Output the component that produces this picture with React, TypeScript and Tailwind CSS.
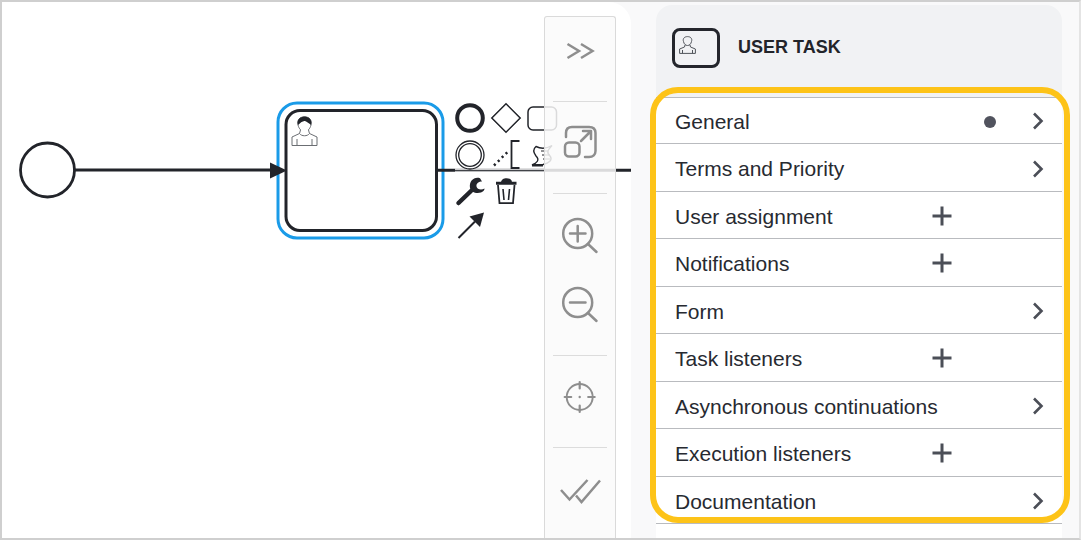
import React from "react";

const ink = "#22242a";
const tool = "#8e8e8e";

function Diagram() {
  return (
    <svg className="block w-[631px] h-[538px]" viewBox="0 0 631 538" fill="none">
      <g transform="translate(0,-2)">
        <circle cx="47.500" cy="170" r="27" stroke={ink} strokeWidth="2.800" fill="#fff" />
        <path d="M75 170H272" stroke={ink} strokeWidth="3" />
        <rect x="278" y="103" width="165" height="135" rx="19" stroke="#1a9be8" strokeWidth="3" />
        <rect x="286" y="110.500" width="150.500" height="120" rx="14" stroke={ink} strokeWidth="3" fill="#fff" />
        <path d="M270 162.500L287 170.500L270 178.500Z" fill={ink} />
        <path d="M437 170.200H631" stroke={ink} strokeWidth="3" />
        <rect x="455" y="168.500" width="90" height="1.400" fill="#fff" opacity="0.85" />
        <rect x="455" y="170.800" width="90" height="1" fill="#fff" opacity="0.75" />
        <svg x="291" y="116" width="27" height="30" viewBox="0 0 27 30" stroke="#6b6e73" strokeWidth="1" fill="none">
          <path d="M7 9C5.500 4 9 .8 13.500 .8C18 .8 21.500 4 20 9C19 13 16.500 15.500 13.500 15.500C10.500 15.500 8 13 7 9Z" fill="#fff" />
          <path d="M7 9C9 7 12 4.500 14 5C16 6 18 7 20 9C21.500 4 18 .5 13.500 .5C9 .5 5.500 4 7 9Z" fill={ink} stroke="none" />
          <path d="M9.500 14L8.500 17.500L1 21V29.500H26V21L18.500 17.500L17.500 14" fill="#fff" />
          <path d="M8.500 17.500C10.500 20.500 16.500 20.500 18.500 17.500M6 29.500V23M21 29.500V23" />
        </svg>
        {/* context pad */}
        <circle cx="470" cy="118" r="12.800" stroke={ink} strokeWidth="4" fill="#fff" />
        <path d="M506 103.800L520.200 118L506 132.200L491.800 118Z" stroke={ink} strokeWidth="1.500" fill="#fff" />
        <rect x="528" y="107" width="28.500" height="23" rx="5" stroke={ink} strokeWidth="1.500" fill="#fff" />
        <circle cx="470" cy="155" r="14" stroke={ink} strokeWidth="1.300" fill="#fff" />
        <circle cx="470" cy="155" r="11.300" stroke={ink} strokeWidth="1.300" />
        <path d="M494 165.500L509 150.500" stroke={ink} strokeWidth="2.500" strokeDasharray="2.200 3.300" />
        <path d="M519.500 141H511.500V168H519.500" stroke={ink} strokeWidth="1.800" />
        <path d="M536 146.500C541 149 546 149 552 145.500C548 150 546 152 550 156C553 160 549 163 543 164.500L532 165C537 163 540 160 536 156C533 152 533 149 536 146.500Z" stroke={ink} strokeWidth="1.400" fill="#fff" />
        <path d="M532 165.500H543" stroke={ink} strokeWidth="1.800" />
        <path d="M541 151H548M542 155H550M543 159H550" stroke={ink} strokeWidth="1" />
        <path d="M458.500 203L471 191" stroke={ink} strokeWidth="4.500" strokeLinecap="round" />
        <path d="M480 178.200C474 176.500 469 181 470 188C471 192 476 194 481 192.500C484 191.500 484.500 189.500 484.500 188.500C481.500 190.500 477 189.500 476.500 186.500C476 183 479 181.500 482 181.500Z" fill={ink} />
        <path d="M496 183.300H516.500" stroke={ink} strokeWidth="3" />
        <path d="M501 182.500C501 176.800 512 176.800 512 182.500Z" fill={ink} />
        <path d="M498 185L499.500 203.200H513L514.500 185" stroke={ink} strokeWidth="1.800" fill="#fff" />
        <path d="M503 189L504 200M509.500 189L508.500 200" stroke={ink} strokeWidth="1.600" />
        <path d="M458.500 238L475 221.500" stroke={ink} strokeWidth="2" />
        <path d="M484 212.500L480 227L469.500 216.500Z" fill={ink} />
      </g>
    </svg>
  );
}

const iconCls = "block w-[44px] h-[44px]";

function Toolbar() {
  const sec = "flex items-center justify-center border-b border-[#dcdcdc] mx-[8px] shrink-0";
  return (
    <div className="absolute left-[542px] top-[14px] bottom-0 w-[72px] flex flex-col bg-[#fafafa]/85 border border-b-0 border-[#dadada] rounded-t-[3px]">
      <div className={`${sec} h-[85px] pb-[16px]`}>
        <svg className={iconCls} viewBox="0 0 44 44" fill="none" stroke={tool} strokeWidth="2.500">
          <path d="M9.500 15L21 22L9.500 29M23 15L34.500 22L23 29" />
        </svg>
      </div>
      <div className={`${sec} h-[92px] pb-[14px]`}>
        <svg className={iconCls} viewBox="0 0 44 44" fill="none" stroke={tool} strokeWidth="2.500" strokeLinecap="round" strokeLinejoin="round">
          <rect x="7" y="23.500" width="14.500" height="14" rx="4" />
          <path d="M8 18V14C8 10 10 8 14 8H31C35 8 37.500 10 37.500 14V32C37.500 35.500 35 38 31 38H27" />
          <path d="M23 22L33 12M25 12H33V20" />
        </svg>
      </div>
      <div className={`${sec} h-[162px] flex-col gap-[25px] pb-[8px]`}>
        <svg className={iconCls} viewBox="0 0 44 44" fill="none" stroke={tool} strokeWidth="2.500" strokeLinecap="round">
          <circle cx="19.700" cy="19.500" r="14.500" />
          <path d="M30 30L38.500 38M12 19.500H27.500M19.700 12V27.500" />
        </svg>
        <svg className={iconCls} viewBox="0 0 44 44" fill="none" stroke={tool} strokeWidth="2.500" strokeLinecap="round">
          <circle cx="19.700" cy="19.500" r="14.500" />
          <path d="M30 30L38.500 38M12 19.500H27.500" />
        </svg>
      </div>
      <div className={`${sec} h-[92px] pb-[10px]`}>
        <svg className={iconCls} viewBox="0 0 44 44" fill="none" stroke={tool} strokeWidth="1.900" strokeLinecap="round">
          <circle cx="21.700" cy="22" r="13" />
          <path d="M21.700 7V13.500M21.700 30.500V37M6.700 22H13.200M30.200 22H36.700" strokeWidth="2.200" />
          <circle cx="21.700" cy="22" r="1.200" fill={tool} stroke="none" />
        </svg>
      </div>
      <div className="flex justify-center pt-[23px]">
        <svg className={iconCls} viewBox="0 0 44 44" fill="none" stroke={tool} strokeWidth="2.500">
          <path d="M3 19L11.500 28.500L29.500 9M18 24.500L23.500 31L42 9.500" />
        </svg>
      </div>
    </div>
  );
}

const rows: { label: string; kind: "chevron" | "plus" | "dot" }[] = [
  { label: "General", kind: "dot" },
  { label: "Terms and Priority", kind: "chevron" },
  { label: "User assignment", kind: "plus" },
  { label: "Notifications", kind: "plus" },
  { label: "Form", kind: "chevron" },
  { label: "Task listeners", kind: "plus" },
  { label: "Asynchronous continuations", kind: "chevron" },
  { label: "Execution listeners", kind: "plus" },
  { label: "Documentation", kind: "chevron" },
];

function Row({ label, kind, first }: { label: string; kind: string; first: boolean }) {
  return (
    <div className={`relative shrink-0 flex items-end pb-[9.5px] pl-[19px] border-t border-[#b9bbbf] text-[21px] leading-[24px] text-[#272a31] ${first ? "h-[46px]" : "h-[47.5px]"}`}>
      <span>{label}</span>
      {kind === "plus" && (
        <svg className="absolute left-[276px] bottom-[12.5px] w-[20px] h-[20px]" viewBox="0 0 20 20" stroke="#4b4e57" strokeWidth="3">
          <path d="M.500 10H19.500M10 .500V19.500" />
        </svg>
      )}
      {kind !== "plus" && (
        <svg className="absolute left-[372px] bottom-[13px] w-[20px] h-[18px]" viewBox="0 0 20 18" fill="none" stroke="#4b4e57" strokeWidth="2.600">
          <path d="M6 1.500L13.500 9L6 16.500" />
        </svg>
      )}
      {kind === "dot" && <span className="absolute left-[328px] bottom-[15px] w-[12px] h-[12px] rounded-full bg-[#51535e]" />}
    </div>
  );
}

export default function App() {
  return (
    <div className="relative w-[1081px] h-[540px] overflow-hidden border-t-2 border-b-2 border-l-2 border-r-2 border-[#cfcfcf] border-r-[#e4e4e4] bg-[#f9f9fa] flex font-['Liberation_Sans',Arial,sans-serif]">
      <div className="relative w-[629px] shrink-0 bg-white rounded-tr-[22px] overflow-hidden">
        <div className="-ml-[2px]">
          <Diagram />
        </div>
      </div>
      <Toolbar />
      <div className="relative flex-1 pl-[25px] pr-[17px] pt-[3px] flex">
        <div className="flex-1 flex flex-col bg-[#f1f2f4] rounded-t-[16px] overflow-hidden">
          <div className="h-[92px] shrink-0 flex items-center pl-[16px] gap-[18px]">
            <div className="w-[48px] h-[40px] mb-[6px] border-[3px] border-[#24262c] rounded-[8px] pl-[4px] pt-[5px]">
              <svg className="block w-[17px] h-[18px]" viewBox="0 0 17 18" fill="none" stroke="#50545a" strokeWidth="1">
                <path d="M4.500 5.500C3.500 2.500 5.500 .6 8.500 .6C11.500 .6 13.500 2.500 12.500 5.500C12 8 10.500 9.500 8.500 9.500C6.500 9.500 5 8 4.500 5.500Z" />
                <path d="M6 9L5.500 11L.6 13V17.400H16.400V13L11.500 11L11 9M3.500 17.400V14M13.500 17.400V14" />
              </svg>
            </div>
            <span className="mb-[8px] text-[18px] font-bold text-[#22242a]">USER TASK</span>
          </div>
          <div className="flex-1 flex flex-col bg-white">
            {rows.map((r, i) => (
              <Row key={r.label} label={r.label} kind={r.kind} first={i === 0} />
            ))}
            <div className="border-t border-[#b9bbbf]" />
          </div>
        </div>
        <div className="absolute left-[19px] top-[85px] w-[420px] h-[436px] border-[6px] border-[#fdc318] rounded-[28px]" />
      </div>
    </div>
  );
}
